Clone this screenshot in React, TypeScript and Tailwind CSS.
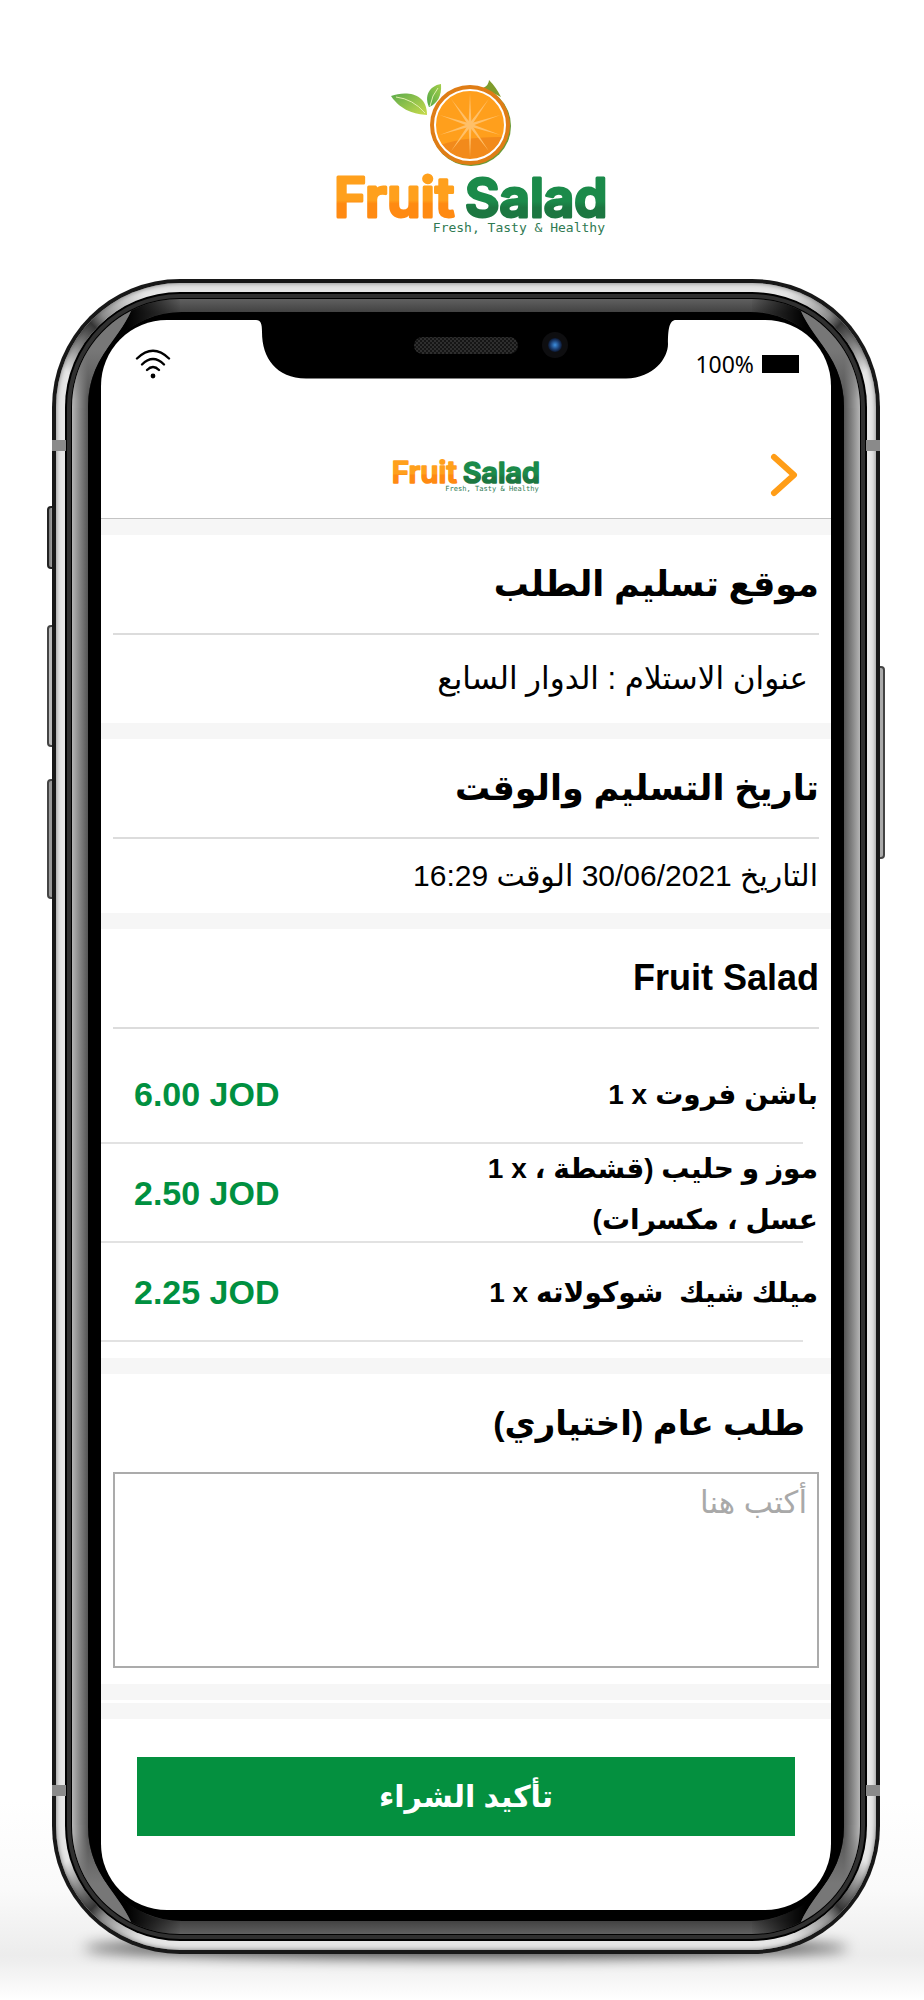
import React from "react";

const items = [
  { name: <>باشن فروت</>, qty: 1, price: "6.00 JOD" },
  {
    name: (
      <>
        موز و حليب (قشطة ،<br />
        عسل ، مكسرات)
      </>
    ),
    qty: 1,
    price: "2.50 JOD",
  },
  { name: <>ميلك شيك&nbsp; شوكولاته</>, qty: 1, price: "2.25 JOD" },
];

const LogoText = ({ id }: { id: string }) => (
  <>
    <defs>
      <linearGradient id={id + "o"} x1="0" y1="0" x2="0" y2="1">
        <stop offset="0.55" stopColor="#ffa01c" />
        <stop offset="0.6" stopColor="#ff8a12" />
      </linearGradient>
      <linearGradient id={id + "g"} x1="0" y1="0" x2="0" y2="1">
        <stop offset="0.55" stopColor="#1b8a4a" />
        <stop offset="0.65" stopColor="#1c7741" />
      </linearGradient>
    </defs>
    <g fontFamily="Inter, sans-serif" fontWeight="600" strokeWidth="3" strokeLinejoin="round">
      <text x="333" y="217" fontSize="55" fill={`url(#${id}o)`} stroke={`url(#${id}o)`}>Fruit</text>
      <text x="464" y="217" fontSize="53" fill={`url(#${id}g)`} stroke={`url(#${id}g)`}>Salad</text>
    </g>
    <text x="604" y="232" textAnchor="end" fontFamily="DejaVu Sans Mono, monospace" fontSize="13" fill="#2f7a52">
      Fresh, Tasty &amp; Healthy
    </text>
  </>
);

const Logo = () => (
  <svg viewBox="325 75 280 165" className="mx-auto block w-[280px]" role="img" aria-label="Fruit Salad">
    <defs>
      <linearGradient id="leafA" x1="0" y1="0" x2="1" y2="1">
        <stop offset="0" stopColor="#5cab4c" />
        <stop offset="1" stopColor="#c9db4b" />
      </linearGradient>
      <linearGradient id="leafB" x1="1" y1="0" x2="0" y2="1">
        <stop offset="0" stopColor="#a5cf4a" />
        <stop offset="1" stopColor="#4fa645" />
      </linearGradient>
      <clipPath id="pulp">
        <circle cx="469" cy="124" r="35" />
      </clipPath>
    </defs>
    <path d="M390 96 C404 91 426 92 426 115 C414 114 400 111 390 96Z" fill="url(#leafA)" />
    <path d="M395 97 Q412 99 424 113" stroke="#e3efb0" strokeWidth="1" fill="none" />
    <path d="M428 107 C423 96 428 86 440 84 C441 96 436 104 428 107Z" fill="url(#leafB)" />
    <path d="M429 106 Q431 95 437 88" stroke="#e3efb0" strokeWidth="1" fill="none" />
    <path d="M482 88 Q488 85 488 80 Q495 87 500 97Z" fill="#7f9c2b" />
    <circle cx="470" cy="126" r="40" fill="#6c9a35" />
    <circle cx="469" cy="125" r="40" fill="#df7d16" />
    <circle cx="469" cy="125" r="35" fill="#ff9f1c" />
    <path d="M430 149 Q455 136 506 137 V165 H430Z" fill="#f28a1b" clipPath="url(#pulp)" />
    <circle cx="469" cy="125" r="35" fill="none" stroke="#fff" strokeWidth="2" />
    <g fill="#ffc069">
      {[0, 36, 72, 108, 144, 180, 216, 252, 288, 324].map((a) => (
        <path key={a} d="M467.5 125 L469 93 L470.5 125Z" transform={`rotate(${a} 469 125)`} />
      ))}
      <circle cx="469" cy="125" r="3.5" />
    </g>
    <LogoText id="big" />
  </svg>
);

const Corner = ({ className, id }: { className: string; id: string }) => (
  <svg viewBox="0 0 130 130" className={`pointer-events-none absolute size-[130px] ${className}`} aria-hidden="true">
    <defs>
      <linearGradient id={id + "s"} gradientUnits="userSpaceOnUse" x1="20" y1="0" x2="36" y2="0">
        <stop offset="0" stopColor="#b5b5b5" />
        <stop offset="1" stopColor="#555" />
      </linearGradient>
      <linearGradient id={id + "t"} gradientUnits="userSpaceOnUse" x1="0" y1="130" x2="0" y2="32">
        <stop offset="0.1" stopColor="#777" stopOpacity="0" />
        <stop offset="0.6" stopColor="#777" />
      </linearGradient>
      <linearGradient id={id + "d"} gradientUnits="userSpaceOnUse" x1="0" y1="130" x2="130" y2="0">
        <stop offset="0.2" stopColor="#111" stopOpacity="0" />
        <stop offset="0.48" stopColor="#222" stopOpacity="0.9" />
        <stop offset="0.56" stopColor="#555" stopOpacity="0.6" />
        <stop offset="0.8" stopColor="#888" stopOpacity="0" />
      </linearGradient>
      <linearGradient id={id + "b"} gradientUnits="userSpaceOnUse" x1="75" y1="0" x2="130" y2="0">
        <stop offset="0" stopColor="#000" />
        <stop offset="1" stopColor="#000" stopOpacity="0" />
      </linearGradient>
    </defs>
    <path d="M8.5 128 A119.5 119.5 0 0 1 128 8.5" fill="none" stroke={`url(#${id}d)`} strokeWidth="9" />
    <path d="M20 128 A108 108 0 0 1 128 20 V33 C80 33 36 76 36 128Z" fill={`url(#${id}b)`} />
    <path d="M20 129 V128 A108 108 0 0 1 79 32 C66 62 36 80 36 129Z" fill={`url(#${id}s)`} />
    <path d="M20 129 V128 A108 108 0 0 1 79 32 C66 62 36 80 36 129Z" fill={`url(#${id}t)`} />
  </svg>
);

const Heading = ({ children, className = "text-[35px]" }: { children: React.ReactNode; className?: string }) => (
  <h2 className={`mx-3 flex h-[100px] items-center border-b-2 border-[#dcdcdc] font-bold ${className}`}>
    {children}
  </h2>
);

const Divider = () => <div className="h-4 bg-[#f6f6f6]" />;

const StatusBar = () => (
  <div dir="ltr" className="flex h-[88px] items-center justify-between pl-[34px] pr-8">
    <svg viewBox="0 0 36 30" className="h-[30px] w-9" fill="none" stroke="#000" strokeWidth="2.4" strokeLinecap="round" aria-label="Wi-Fi">
      <path d="M2 9.500 Q18 -6 34 9.500" />
      <path d="M7 15.500 Q18 4.500 29 15.500" />
      <path d="M12 21 Q18 15 24 21" />
      <circle cx="18" cy="27" r="1.200" fill="#000" />
    </svg>
    <div className="flex items-center gap-2">
      <span className="font-['Noto_Sans',sans-serif] text-[23px] leading-none">100%</span>
      <span className="h-[18px] w-[37px] bg-black" />
    </div>
  </div>
);

const Notch = () => (
  <div className="absolute inset-x-0 top-0 flex justify-center">
    <svg viewBox="0 0 420 59" className="h-[59px] w-[420px]" aria-hidden="true">
      <defs>
        <pattern id="mesh" width="4" height="4" patternUnits="userSpaceOnUse">
          <rect width="4" height="4" fill="#2e2e2e" />
          <circle cx="1" cy="1" r="1" fill="#0c0c0c" />
          <circle cx="3" cy="3" r="1" fill="#0c0c0c" />
        </pattern>
        <radialGradient id="lens">
          <stop offset="0" stopColor="#3d8fe0" />
          <stop offset="0.6" stopColor="#1d4379" />
          <stop offset="1" stopColor="#0c1730" />
        </radialGradient>
      </defs>
      <path d="M0 0 C5 0 6 4 6 12 C6 38 20 58 50 58.500 H370 C398 58 412 38 412 24 C412 10 413 0 420 0Z" />
      <rect x="158" y="17" width="104" height="17" rx="8.500" fill="url(#mesh)" />
      <circle cx="299" cy="25" r="13" fill="#0e0e10" />
      <circle cx="299" cy="25" r="7" fill="url(#lens)" />
    </svg>
  </div>
);

const Screen = () => (
  <main dir="rtl" className="relative overflow-hidden rounded-[66px] bg-white text-black">
    <Notch />
    <StatusBar />
    <header dir="ltr" className="grid grid-cols-3 items-center border-b border-[#c4c4c4] px-8 pb-5 pt-11">
      <svg viewBox="330 166 280 74" className="col-start-2 w-[152px] justify-self-center" role="img" aria-label="Fruit Salad">
        <LogoText id="small" />
      </svg>
      <button type="button" aria-label="رجوع" className="justify-self-end">
        <svg viewBox="0 0 30 46" className="h-[46px] w-[30px]" fill="none" stroke="#ff9d17" strokeWidth="6" strokeLinecap="round" strokeLinejoin="round">
          <path d="M5 5 L25 23 L5 41" />
        </svg>
      </button>
    </header>
    <Divider />

    <section>
      <Heading>موقع تسليم الطلب</Heading>
      <p className="px-[23px] py-[19px] text-[31px] leading-[50px]">عنوان الاستلام : الدوار السابع</p>
    </section>
    <Divider />

    <section>
      <Heading>تاريخ التسليم والوقت</Heading>
      <p className="px-[13px] py-3 text-[30px] leading-[50px]">التاريخ 30/06/2021 الوقت 16:29</p>
    </section>
    <Divider />

    <section className="pb-4">
      <Heading className="text-[36px]">Fruit Salad</Heading>
      <ul className="mt-4">
        {items.map((item) => (
          <li key={item.price} className="relative flex h-[99px] items-center justify-between pl-[33px] pr-[13px]">
            <div className="flex items-start gap-2 text-[28px] font-bold leading-[51px]">
              <span>{item.name}</span>
              <span dir="ltr">{item.qty} x</span>
            </div>
            <span dir="ltr" className="text-[34px] font-bold text-[#009040]">
              {item.price}
            </span>
            <span className="absolute bottom-0 left-0 right-7 h-0.5 bg-[#e2e2e2]" />
          </li>
        ))}
      </ul>
    </section>
    <Divider />

    <section className="px-3 pb-4">
      <label htmlFor="note" className="flex h-[98px] items-center px-3.5 text-[34px] font-bold">
        طلب عام (اختياري)
      </label>
      <textarea
        id="note"
        placeholder="أكتب هنا"
        className="block h-[196px] w-full resize-none border-2 border-[#ababab] px-[10px] py-1 text-[31px] leading-[50px] outline-none placeholder:text-[#a9a9a9]"
      />
    </section>
    <Divider />
    <div className="h-[3px]" />
    <Divider />

    <div className="px-9 pb-[74px] pt-[38px]">
      <button type="button" className="h-[79px] w-full bg-[#04903f] text-[30px] font-bold text-white">
        تأكيد الشراء
      </button>
    </div>
  </main>
);

export default function App() {
  return (
    <div className="min-h-screen overflow-hidden bg-white bg-[linear-gradient(to_top,#fff_0px,#ececec_44px,#fafafa_110px,#fff_200px)] pb-[42px] pl-[52px] pr-[44px] pt-[75px] font-['Liberation_Sans','DejaVu_Sans',sans-serif]">
      <Logo />
      <div className="relative mt-[39px]">
        {/* ground shadow */}
        <div className="absolute -bottom-1 left-8 right-8 h-5 rounded-[50%] bg-black/70 blur-[7px]" />
        {/* side keys */}
        <div className="absolute -left-[5px] top-[227px] h-[63px] w-3 rounded-l border-2 border-[#222] bg-gradient-to-r from-[#777] to-[#eee]" />
        <div className="absolute -left-[5px] top-[346px] h-[122px] w-3 rounded-l border-2 border-[#444] bg-[#bbb]" />
        <div className="absolute -left-[5px] top-[500px] h-[120px] w-3 rounded-l border-2 border-[#444] bg-[#999]" />
        <div className="absolute -right-[5px] top-[387px] h-[193px] w-3 rounded-r border-2 border-[#444] bg-[#aaa]" />

        <div className="relative rounded-[128px] bg-[#181818] p-1">
          <div className="rounded-[124px] bg-[#e6e6e6] p-[9px] shadow-[inset_0_0_5px_#777]">
            <div className="rounded-[115px] bg-black p-0.5">
              <div className="rounded-[113px] bg-[#303030] p-1">
                <div className="rounded-[109px] bg-black p-px">
                  <div className="rounded-[108px] bg-[linear-gradient(to_bottom,#606060,#404040_14px,#404040_calc(100%-14px),#606060)]">
                    <div className="relative rounded-[108px] px-4 py-[13px]">
                      <div className="absolute inset-y-[108px] left-0 w-4 bg-gradient-to-r from-[#b5b5b5] to-[#555]" />
                      <div className="absolute inset-y-[108px] right-0 w-4 bg-gradient-to-l from-[#b5b5b5] to-[#555]" />
                      <div className="relative z-10 rounded-[94px] bg-black px-[13px] pb-[11px] pt-2">
                        <Screen />
                      </div>
                    </div>
                  </div>
                </div>
              </div>
            </div>
          </div>
          <Corner id="tl" className="left-0 top-0" />
          <Corner id="tr" className="right-0 top-0 -scale-x-100" />
          <Corner id="bl" className="bottom-0 left-0 -scale-y-100" />
          <Corner id="br" className="bottom-0 right-0 -scale-100" />
          {/* antenna bands */}
          <div className="absolute left-0 top-[161px] h-[11px] w-3.5 bg-[#8a8a8a]" />
          <div className="absolute right-0 top-[161px] h-[11px] w-3.5 bg-[#8a8a8a]" />
          <div className="absolute bottom-[158px] left-0 h-[11px] w-3.5 bg-[#8a8a8a]" />
          <div className="absolute bottom-[158px] right-0 h-[11px] w-3.5 bg-[#8a8a8a]" />
        </div>
      </div>
    </div>
  );
}
